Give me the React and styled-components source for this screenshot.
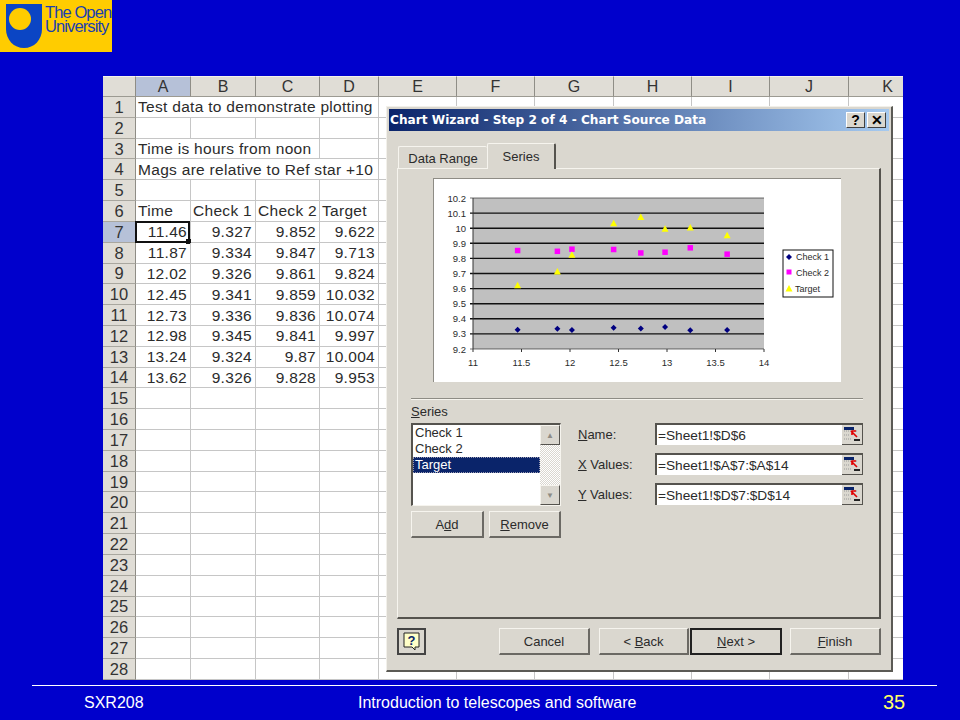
import styled, { createGlobalStyle } from 'styled-components';

const GlobalStyle = createGlobalStyle`
  html, body {
    margin: 0;
    padding: 0;
    background: #0000cc;
  }
`;

const Slide = styled.div`
  background: #0000cc;
  display: flex;
  flex-direction: column;
  font-family: "Liberation Sans", Arial, sans-serif;
  height: 720px;
  overflow: hidden;
  position: relative;
  width: 960px;
`;

const TopBar = styled.div`
  display: flex;
  height: 76px;
`;

const LogoBox = styled.div`
  align-items: flex-start;
  background: #ffcc00;
  box-sizing: border-box;
  display: flex;
  gap: 2px;
  height: 52px;
  padding: 4px 0 0 6px;
  width: 112px;
`;

const LogoMark = styled.svg`
  flex-shrink: 0;
`;

const LogoText = styled.div`
  color: #1a3fb0;
  font-size: 16.5px;
  letter-spacing: -0.9px;
  line-height: 13.5px;
  margin-top: 2px;
  white-space: nowrap;
`;

const SheetWrap = styled.div`
  margin-left: 103px;
  position: relative;
  width: 800px;
`;

const Sheet = styled.div`
  background: #fff;
  display: grid;
  grid-template-columns: 33px 55px 65px 64px 59px 78px 78px 79px 78px 78px 79px 78px;
  grid-template-rows: 21px repeat(28, 20.82px);
  height: 604px;
  overflow: hidden;
`;

const ColHead = styled.div`
  align-items: center;
  background: ${p => (p.$active ? '#b6c1d8' : '#e0ddd6')};
  border-bottom: 1px solid #9c9a92;
  border-right: 1px solid #8f8d86;
  border-top: 1px solid #f4f2ec;
  box-sizing: border-box;
  color: #333;
  display: flex;
  font-size: 16px;
  justify-content: center;
`;

const RowHead = styled(ColHead)`
  border-bottom: 1px solid #a9a79f;
  border-right: 1px solid #8f8d86;
  border-top: none;
  font-size: 16.5px;
  padding-top: 1px;
`;

const Cell = styled.div`
  align-items: center;
  border-bottom: 1px solid #c6c6c6;
  border-right: 1px solid #c6c6c6;
  box-sizing: border-box;
  color: #2b2b2b;
  display: flex;
  font-size: 15.5px;
  grid-column: span ${p => p.$span || 1};
  justify-content: ${p => (p.$num ? 'flex-end' : 'flex-start')};
  letter-spacing: 0.3px;
  overflow: visible;
  padding: ${p => (p.$num ? '1px 3px 0 0' : '1px 0 0 2px')};
  position: relative;
  white-space: nowrap;
`;

const Selection = styled.div`
  border: 2px solid #111;
  bottom: -1px;
  left: -1px;
  position: absolute;
  right: 0;
  top: -1px;
  &::after {
    background: #111;
    bottom: -3px;
    content: '';
    height: 5px;
    position: absolute;
    right: -3px;
    width: 5px;
  }
`;

const Dialog = styled.div`
  background: #dad7cf;
  border-bottom: 2px solid #5b5a55;
  border-left: 1px solid #f2f0ea;
  border-right: 2px solid #5b5a55;
  border-top: 1px solid #f2f0ea;
  box-sizing: border-box;
  display: flex;
  flex-direction: column;
  height: 566px;
  left: 283px;
  padding: 2px;
  position: absolute;
  top: 30px;
  width: 507px;
`;

const TitleBar = styled.div`
  align-items: center;
  background: linear-gradient(90deg, #0a246a 0%, #a6caf0 100%);
  box-sizing: border-box;
  color: #fff;
  display: flex;
  font-family: "DejaVu Sans", sans-serif;
  font-size: 12.15px;
  font-weight: bold;
  height: 22px;
  justify-content: space-between;
  padding: 0 3px 1px 1px;
`;

const TitleButtons = styled.div`
  display: flex;
  gap: 2px;
`;

const TitleButton = styled.div`
  align-items: center;
  background: #dad7cf;
  border-bottom: 1px solid #404040;
  border-left: 1px solid #fff;
  border-right: 1px solid #404040;
  border-top: 1px solid #fff;
  box-sizing: border-box;
  color: #000;
  display: flex;
  font-family: "Liberation Sans", sans-serif;
  font-size: 14px;
  font-weight: bold;
  height: 16px;
  justify-content: center;
  width: 19px;
`;

const Body = styled.div`
  display: flex;
  flex: 1;
  flex-direction: column;
  padding: 12px 8px 0 8px;
`;

const Tabs = styled.div`
  align-items: flex-end;
  display: flex;
  height: 25px;
  margin-left: 1px;
  position: relative;
  z-index: 1;
`;

const Tab = styled.div`
  align-items: center;
  background: #dad7cf;
  border-left: 1px solid #f6f4ee;
  border-radius: 2px 2px 0 0;
  border-right: ${p => (p.$active ? '2px solid #55534e' : 'none')};
  border-top: 1px solid #f6f4ee;
  box-sizing: border-box;
  color: #2b2b2b;
  display: flex;
  font-size: 13px;
  height: ${p => (p.$active ? '26px' : '22px')};
  justify-content: center;
  margin-bottom: ${p => (p.$active ? '-1px' : '0')};
  padding-top: ${p => (p.$active ? '0' : '1px')};
  width: ${p => (p.$active ? '69px' : '89px')};
`;

const Panel = styled.div`
  border-bottom: 2px solid #55534e;
  border-left: 1px solid #f6f4ee;
  border-right: 2px solid #55534e;
  border-top: 1px solid #f6f4ee;
  box-sizing: border-box;
  display: flex;
  flex-direction: column;
  height: 451px;
  padding: 9px 16px 0 13px;
`;

const ChartBox = styled.div`
  align-self: flex-start;
  background: #fff;
  border-left: 1px solid #8e8c85;
  border-top: 1px solid #8e8c85;
  box-sizing: border-box;
  height: 204px;
  margin: 0 0 16px 22px;
  width: 408px;
`;

const Rule = styled.div`
  border-bottom: 1px solid #f6f4ee;
  border-top: 1px solid #8e8c85;
  height: 0;
`;

const SeriesLabel = styled.div`
  color: #2b2b2b;
  font-size: 13px;
  margin: 4px 0 4px 0;
`;

const Underline = styled.span`
  text-decoration: underline;
`;

const SeriesRow = styled.div`
  display: flex;
  gap: 16px;
`;

const SeriesLeft = styled.div`
  display: flex;
  flex-direction: column;
  gap: 5px;
  width: 150px;
`;

const ListBox = styled.div`
  background: #fff;
  border-bottom: 1px solid #f6f4ee;
  border-left: 2px solid #55534e;
  border-right: 1px solid #f6f4ee;
  border-top: 2px solid #55534e;
  box-sizing: border-box;
  display: flex;
  height: 83px;
`;

const ListItems = styled.div`
  display: flex;
  flex: 1;
  flex-direction: column;
  font-size: 13px;
`;

const ListItem = styled.div`
  background: ${p => (p.$selected ? '#0a246a' : 'transparent')};
  color: ${p => (p.$selected ? '#fff' : '#2b2b2b')};
  height: 16px;
  line-height: 16px;
  outline: ${p => (p.$selected ? '1px dotted #9a9ab0' : 'none')};
  outline-offset: -1px;
  padding-left: 2px;
`;

const ScrollBar = styled.div`
  background: repeating-conic-gradient(#fff 0% 25%, #dad7cf 0% 50%) 0 0 / 2px 2px;
  display: flex;
  flex-direction: column;
  justify-content: space-between;
  width: 20px;
`;

const ScrollButton = styled.div`
  align-items: center;
  background: #dad7cf;
  border-bottom: 1px solid #55534e;
  border-left: 1px solid #f6f4ee;
  border-right: 1px solid #55534e;
  border-top: 1px solid #f6f4ee;
  box-sizing: border-box;
  color: #8e8c85;
  display: flex;
  font-size: 8px;
  height: 20px;
  justify-content: center;
`;

const Buttons = styled.div`
  display: flex;
  gap: ${p => p.$gap || 0}px;
`;

const Button = styled.div`
  align-items: center;
  background: #dad7cf;
  border-bottom: 2px solid ${p => (p.$default ? '#222' : '#6b6964')};
  border-left: ${p => (p.$default ? '2px solid #222' : '1px solid #f6f4ee')};
  border-right: 2px solid ${p => (p.$default ? '#222' : '#6b6964')};
  border-top: ${p => (p.$default ? '2px solid #222' : '1px solid #f6f4ee')};
  box-sizing: border-box;
  color: #2b2b2b;
  display: flex;
  font-size: 13px;
  height: 27px;
  justify-content: center;
  margin-left: ${p => p.$ml || 0}px;
  width: ${p => p.$w}px;
`;

const ButtonLabel = styled.span`
  white-space: pre;
`;

const Fields = styled.div`
  display: flex;
  flex: 1;
  flex-direction: column;
  gap: 8px;
`;

const Field = styled.div`
  align-items: center;
  display: flex;
`;

const FieldLabel = styled.div`
  color: #2b2b2b;
  font-size: 13px;
  padding: 1px 0 0 1px;
  width: 77px;
`;

const FieldInput = styled.div`
  align-items: center;
  background: #fff;
  border-left: 2px solid #55534e;
  border-top: 2px solid #55534e;
  box-sizing: border-box;
  color: #2b2b2b;
  display: flex;
  flex: 1;
  font-size: 13.7px;
  height: 22px;
  justify-content: space-between;
  padding-left: 1px;
`;

const RefButton = styled.div`
  align-items: center;
  background: #dad7cf;
  border-bottom: 1px solid #55534e;
  border-right: 1px solid #55534e;
  box-sizing: border-box;
  display: flex;
  height: 20px;
  justify-content: center;
  width: 21px;
`;

const FooterRow = styled.div`
  align-items: center;
  display: flex;
  justify-content: space-between;
  margin-top: 9px;
`;

const HelpButton = styled.div`
  align-items: center;
  border: 2px solid #444;
  box-sizing: border-box;
  display: flex;
  height: 27px;
  justify-content: center;
  width: 29px;
`;

const Footer = styled.div`
  border-top: 1px solid #fff;
  color: #fff;
  display: grid;
  font-size: 16px;
  grid-template-columns: 274px 525px 1fr;
  margin: 5px 23px 0 32px;
  padding: 8px 0 0 52px;
`;

const PageNum = styled.div`
  color: #ffff66;
  font-size: 20px;
  margin-top: -3px;
`;

const columns = ['A', 'B', 'C', 'D', 'E', 'F', 'G', 'H', 'I', 'J', 'K'];

const tableRows = [
  ['Time', 'Check 1', 'Check 2', 'Target'],
  ['11.46', '9.327', '9.852', '9.622'],
  ['11.87', '9.334', '9.847', '9.713'],
  ['12.02', '9.326', '9.861', '9.824'],
  ['12.45', '9.341', '9.859', '10.032'],
  ['12.73', '9.336', '9.836', '10.074'],
  ['12.98', '9.345', '9.841', '9.997'],
  ['13.24', '9.324', '9.87', '10.004'],
  ['13.62', '9.326', '9.828', '9.953'],
];

const textRows = {
  1: { text: 'Test data to demonstrate plotting', span: 4 },
  3: { text: 'Time is hours from noon', span: 3 },
  4: { text: 'Mags are relative to Ref star +10', span: 4 },
};

function EmptyCells({ count }) {
  return Array.from({ length: count }, (_, i) => <Cell key={i} />);
}

function SheetRow({ n }) {
  const head = <RowHead $active={n === 7}>{n}</RowHead>;
  const textRow = textRows[n];
  if (textRow) {
    return (
      <>
        {head}
        <Cell $span={textRow.span}>{textRow.text}</Cell>
        <EmptyCells count={11 - textRow.span} />
      </>
    );
  }
  if (n >= 6 && n <= 14) {
    const values = tableRows[n - 6];
    return (
      <>
        {head}
        {values.map((v, i) => (
          <Cell key={i} $num={n > 6}>
            {v}
            {n === 7 && i === 0 && <Selection />}
          </Cell>
        ))}
        <EmptyCells count={7} />
      </>
    );
  }
  return (
    <>
      {head}
      <EmptyCells count={11} />
    </>
  );
}

function Logo() {
  return (
    <LogoBox>
      <LogoMark width="37" height="44" viewBox="0 0 37 44">
        <path d="M0 0H36V25C36 36 28 44 18 44C8 44 0 36 0 25Z" fill="#0b45c4" />
        <circle cx="14" cy="15" r="11" fill="#ffcc00" />
      </LogoMark>
      <LogoText>The Open<br />University</LogoText>
    </LogoBox>
  );
}

function Chart() {
  const xs = [11.46, 11.87, 12.02, 12.45, 12.73, 12.98, 13.24, 13.62];
  const check1 = [9.327, 9.334, 9.326, 9.341, 9.336, 9.345, 9.324, 9.326];
  const check2 = [9.852, 9.847, 9.861, 9.859, 9.836, 9.841, 9.87, 9.828];
  const target = [9.622, 9.713, 9.824, 10.032, 10.074, 9.997, 10.004, 9.953];
  const px = v => 39 + (v - 11) * 97;
  const py = v => 19 + (10.2 - v) * 151;
  const yLabels = ['10.2', '10.1', '10', '9.9', '9.8', '9.7', '9.6', '9.5', '9.4', '9.3', '9.2'];
  const xLabels = ['11', '11.5', '12', '12.5', '13', '13.5', '14'];
  return (
    <svg width="407" height="203" viewBox="0 0 407 203" fontFamily="Liberation Sans, sans-serif" fontSize="9.5" fill="#2b2b2b">
      <rect x="39" y="19" width="291" height="151" fill="#c0c0c0" />
      {yLabels.map((l, i) => (
        <g key={l}>
          <line x1="36" x2="330" y1={19 + i * 15.1} y2={19 + i * 15.1} stroke="#111" strokeWidth={i === 0 || i === 10 ? 0.6 : 1.4} />
          <text x="32" y={22.500 + i * 15.1} textAnchor="end">{l}</text>
        </g>
      ))}
      <line x1="39" x2="39" y1="19" y2="170" stroke="#333" />
      {xLabels.map((l, i) => (
        <g key={l}>
          <line x1={39 + i * 48.5} x2={39 + i * 48.5} y1="170" y2="173" stroke="#333" />
          <text x={39 + i * 48.5} y="187" textAnchor="middle">{l}</text>
        </g>
      ))}
      {xs.map((x, i) => (
        <g key={x}>
          <path d={`M${px(x)} ${py(check1[i]) - 3}l3 3l-3 3l-3 -3Z`} fill="#000080" />
          <rect x={px(x) - 2.750} y={py(check2[i]) - 2.750} width="5.500" height="5.500" fill="#ff00ff" />
          <path d={`M${px(x)} ${py(target[i]) - 3.500}l3.500 6.500h-7Z`} fill="#ffff00" />
        </g>
      ))}
      <rect x="349" y="71" width="50" height="47" fill="#fff" stroke="#111" />
      <path d="M355 75l3 3l-3 3l-3 -3Z" fill="#000080" />
      <rect x="352.500" y="90.500" width="5" height="5" fill="#ff00ff" />
      <path d="M355 106l3.500 6.500h-7Z" fill="#ffff00" />
      <text x="362" y="81" fontSize="9">Check 1</text>
      <text x="362" y="97" fontSize="9">Check 2</text>
      <text x="361" y="113" fontSize="9">Target</text>
    </svg>
  );
}

function RefIcon() {
  return (
    <svg width="17" height="15" viewBox="0 0 17 15">
      <rect x="0" y="0" width="10" height="3" fill="#0a246a" />
      <path d="M0 4H14M0 8H5M0 12H8" stroke="#999" strokeDasharray="1 1" />
      <path d="M7 4L13 10M8 8V4H12" stroke="#e00000" strokeWidth="1.600" fill="none" />
      <rect x="10" y="12" width="6" height="2" fill="#222" />
    </svg>
  );
}

function HelpIcon() {
  return (
    <svg width="17" height="19" viewBox="0 0 17 19">
      <path d="M1 1H16V15H12V18L9 15H1Z" fill="#ffffc8" stroke="#222" />
      <text x="8.500" y="13" textAnchor="middle" fontFamily="Liberation Sans, sans-serif" fontWeight="bold" fontSize="13" fill="#0a246a">?</text>
    </svg>
  );
}

const fields = [
  { key: 'N', rest: 'ame:', value: '=Sheet1!$D$6' },
  { key: 'X', rest: ' Values:', value: '=Sheet1!$A$7:$A$14' },
  { key: 'Y', rest: ' Values:', value: '=Sheet1!$D$7:$D$14' },
];

export default function App() {
  return (
    <Slide>
      <GlobalStyle />
      <TopBar><Logo /></TopBar>
      <SheetWrap>
        <Sheet>
          <ColHead />
          {columns.map(c => <ColHead key={c} $active={c === 'A'}>{c}</ColHead>)}
          {Array.from({ length: 28 }, (_, i) => <SheetRow key={i} n={i + 1} />)}
        </Sheet>
        <Dialog>
          <TitleBar>
            Chart Wizard - Step 2 of 4 - Chart Source Data
            <TitleButtons>
              <TitleButton>?</TitleButton>
              <TitleButton>✕</TitleButton>
            </TitleButtons>
          </TitleBar>
          <Body>
            <Tabs>
              <Tab>Data Range</Tab>
              <Tab $active>Series</Tab>
            </Tabs>
            <Panel>
              <ChartBox><Chart /></ChartBox>
              <Rule />
              <SeriesLabel><Underline>S</Underline>eries</SeriesLabel>
              <SeriesRow>
                <SeriesLeft>
                  <ListBox>
                    <ListItems>
                      <ListItem>Check 1</ListItem>
                      <ListItem>Check 2</ListItem>
                      <ListItem $selected>Target</ListItem>
                    </ListItems>
                    <ScrollBar>
                      <ScrollButton>▲</ScrollButton>
                      <ScrollButton>▼</ScrollButton>
                    </ScrollBar>
                  </ListBox>
                  <Buttons $gap={5}>
                    <Button $w={73}><ButtonLabel>A<Underline>d</Underline>d</ButtonLabel></Button>
                    <Button $w={72}><ButtonLabel><Underline>R</Underline>emove</ButtonLabel></Button>
                  </Buttons>
                </SeriesLeft>
                <Fields>
                  {fields.map(f => (
                    <Field key={f.key}>
                      <FieldLabel><Underline>{f.key}</Underline>{f.rest}</FieldLabel>
                      <FieldInput>{f.value}<RefButton><RefIcon /></RefButton></FieldInput>
                    </Field>
                  ))}
                </Fields>
              </SeriesRow>
            </Panel>
            <FooterRow>
              <HelpButton><HelpIcon /></HelpButton>
              <Buttons>
                <Button $w={91}><ButtonLabel>Cancel</ButtonLabel></Button>
                <Button $w={90} $ml={9}><ButtonLabel>&lt; <Underline>B</Underline>ack</ButtonLabel></Button>
                <Button $w={92} $ml={1} $default><ButtonLabel><Underline>N</Underline>ext &gt;</ButtonLabel></Button>
                <Button $w={91} $ml={8}><ButtonLabel><Underline>F</Underline>inish</ButtonLabel></Button>
              </Buttons>
            </FooterRow>
          </Body>
        </Dialog>
      </SheetWrap>
      <Footer>
        <div>SXR208</div>
        <div>Introduction to telescopes and software</div>
        <PageNum>35</PageNum>
      </Footer>
    </Slide>
  );
}
